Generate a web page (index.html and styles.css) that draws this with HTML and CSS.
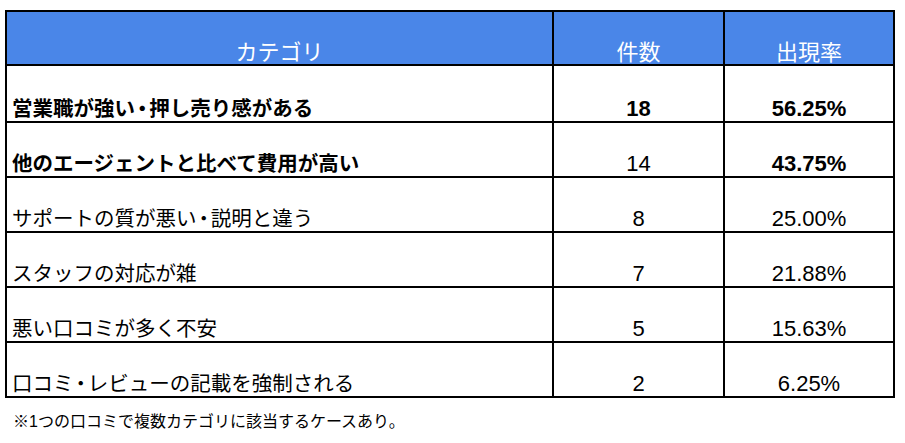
FILE: index.html
```html
<!DOCTYPE html>
<html lang="ja">
<head>
<meta charset="utf-8">
<link rel="stylesheet" href="styles.css">
</head>
<body>
<div class="sheet">
  <div class="grid">
    <div class="cell head c1">カテゴリ</div>
    <div class="cell head">件数</div>
    <div class="cell head">出現率</div>

    <div class="cell label bold r1">営業職が強い<span class="dot">・</span>押し売り感がある</div>
    <div class="cell num bold r1">18</div>
    <div class="cell num bold r1">56.25%</div>

    <div class="cell label bold">他のエージェントと比べて費用が高い</div>
    <div class="cell num">14</div>
    <div class="cell num bold">43.75%</div>

    <div class="cell label">サポートの質が悪い<span class="dot">・</span>説明と違う</div>
    <div class="cell num">8</div>
    <div class="cell num">25.00%</div>

    <div class="cell label">スタッフの対応が雑</div>
    <div class="cell num">7</div>
    <div class="cell num">21.88%</div>

    <div class="cell label">悪い口コミが多く不安</div>
    <div class="cell num">5</div>
    <div class="cell num">15.63%</div>

    <div class="cell label">口コミ<span class="dot">・</span>レビューの記載を強制される</div>
    <div class="cell num">2</div>
    <div class="cell num">6.25%</div>
  </div>
  <p class="note">※1つの口コミで複数カテゴリに該当するケースあり。</p>
</div>
</body>
</html>
```

FILE: styles.css
```css
html, body {
  margin: 0;
  padding: 0;
  background: #ffffff;
}

body {
  font-family: "Liberation Sans", "Noto Sans CJK JP", sans-serif;
  color: #000;
}

.sheet {
  padding: 10px 0 0 5px;
}

.grid {
  display: grid;
  grid-template-columns: 547px 171px 170px;
  grid-template-rows: 54px 57px repeat(5, 55px);
  width: 888px;
  border-left: 2px solid #000;
  border-top: 2px solid #000;
}

.cell {
  border-right: 2px solid #000;
  border-bottom: 2px solid #000;
  display: flex;
  align-items: flex-end;
  justify-content: center;
  line-height: 24px;
  padding-bottom: 0;
  box-sizing: border-box;
  white-space: nowrap;
}

.head {
  background: #4a86e8;
  color: #ffffff;
  font-size: 22px;
  padding-bottom: 0;
  line-height: 23px;
}

.label {
  justify-content: flex-start;
  padding-left: 5px;
  font-size: 20.5px;
}

.dot {
  font-feature-settings: "palt" 1;
  padding: 0 2px;
}

.num {
  font-size: 22px;
}

.bold {
  font-weight: bold;
}

.note {
  margin: 14px 0 0 8px;
  font-size: 16px;
  line-height: 20px;
}
```
